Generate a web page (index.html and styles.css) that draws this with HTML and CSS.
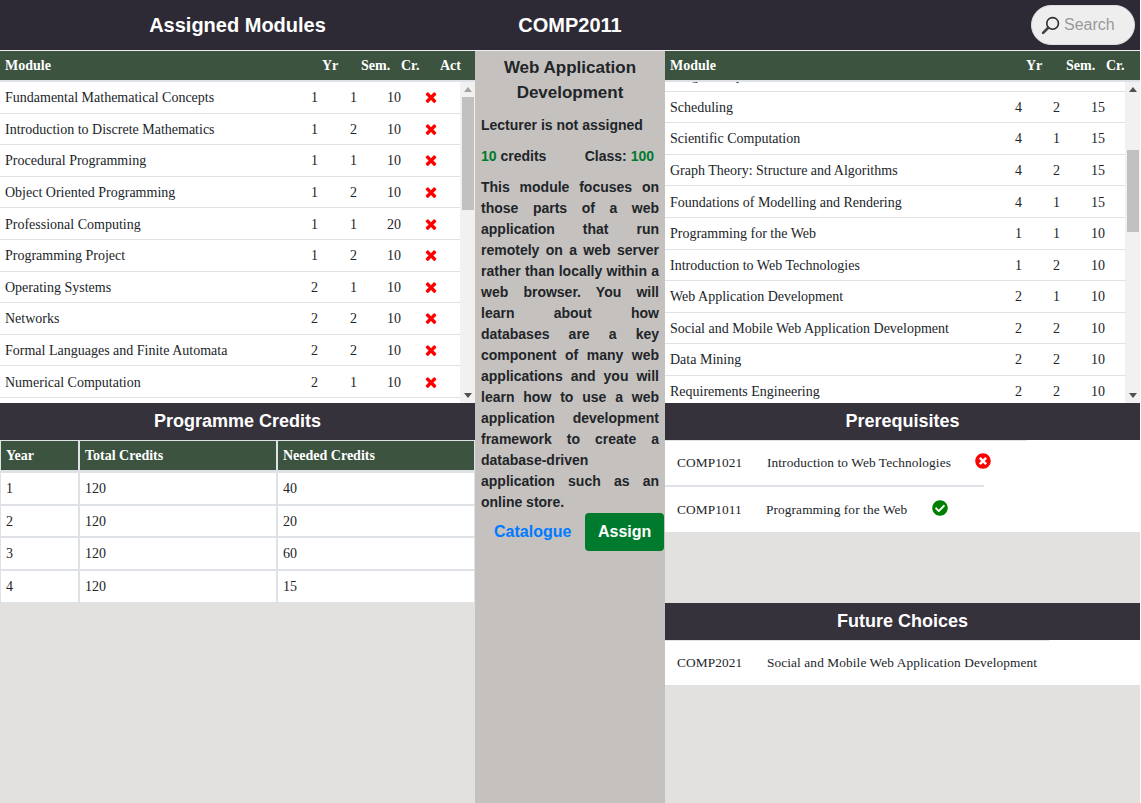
FILE: index.html
```html
<!DOCTYPE html>
<html lang="en">
<head>
<meta charset="utf-8">
<title>Assigned Modules</title>
<link rel="stylesheet" href="styles.css">
</head>
<body>
<svg class="defs" aria-hidden="true">
  <symbol id="i-times" viewBox="0 0 1792 1792"><path d="M1490 1322q0 40-28 68l-136 136q-28 28-68 28t-68-28l-294-294-294 294q-28 28-68 28t-68-28l-136-136q-28-28-28-68t28-68l294-294-294-294q-28-28-28-68t28-68l136-136q28-28 68-28t68 28l294 294 294-294q28-28 68-28t68 28l136 136q28 28 28 68t-28 68l-294 294 294 294q28 28 28 68z"/></symbol>
</svg>
<div class="page">
  <header class="topbar">
    <h1 class="topbar-title">Assigned Modules</h1>
    <h1 class="topbar-title">COMP2011</h1>
    <div class="topbar-search">
      <label class="search">
        <svg class="search-icon" viewBox="0 0 18 18"><circle cx="11" cy="7" r="5.5" fill="none" stroke="#2a2a2a" stroke-width="1.5"/><path d="M6.8 11.2L2 16" stroke="#444" stroke-width="2.6" stroke-linecap="round"/></svg>
        <input class="search-input" type="text" placeholder="Search">
      </label>
    </div>
  </header>
  <main class="columns">
    <section class="col-left">
      <div class="list-head head-left"><span>Module</span><span>Yr</span><span>Sem.</span><span>Cr.</span><span>Act</span></div>
      <div class="list-wrap">
        <div class="list-body">
          <div class="row row-left"><span>Fundamental Mathematical Concepts</span><span>1</span><span>1</span><span>10</span><svg class="x"><use href="#i-times"/></svg></div>
          <div class="row row-left"><span>Introduction to Discrete Mathematics</span><span>1</span><span>2</span><span>10</span><svg class="x"><use href="#i-times"/></svg></div>
          <div class="row row-left"><span>Procedural Programming</span><span>1</span><span>1</span><span>10</span><svg class="x"><use href="#i-times"/></svg></div>
          <div class="row row-left"><span>Object Oriented Programming</span><span>1</span><span>2</span><span>10</span><svg class="x"><use href="#i-times"/></svg></div>
          <div class="row row-left"><span>Professional Computing</span><span>1</span><span>1</span><span>20</span><svg class="x"><use href="#i-times"/></svg></div>
          <div class="row row-left"><span>Programming Project</span><span>1</span><span>2</span><span>10</span><svg class="x"><use href="#i-times"/></svg></div>
          <div class="row row-left"><span>Operating Systems</span><span>2</span><span>1</span><span>10</span><svg class="x"><use href="#i-times"/></svg></div>
          <div class="row row-left"><span>Networks</span><span>2</span><span>2</span><span>10</span><svg class="x"><use href="#i-times"/></svg></div>
          <div class="row row-left"><span>Formal Languages and Finite Automata</span><span>2</span><span>2</span><span>10</span><svg class="x"><use href="#i-times"/></svg></div>
          <div class="row row-left"><span>Numerical Computation</span><span>2</span><span>1</span><span>10</span><svg class="x"><use href="#i-times"/></svg></div>
          <div class="row row-left"><span>Algorithms and Data Structures</span><span>2</span><span>1</span><span>10</span><svg class="x"><use href="#i-times"/></svg></div>
          <div class="row row-left"><span>Databases</span><span>2</span><span>2</span><span>10</span><svg class="x"><use href="#i-times"/></svg></div>
          <div class="row row-left"><span>Software Engineering</span><span>3</span><span>1</span><span>20</span><svg class="x"><use href="#i-times"/></svg></div>
          <div class="row row-left"><span>Computer Architecture</span><span>3</span><span>1</span><span>10</span><svg class="x"><use href="#i-times"/></svg></div>
        </div>
        <div class="sb" aria-hidden="true">
          <div class="sb-arrow sb-up sb-off"></div>
          <div class="sb-track"><div class="sb-thumb sb-thumb-left"></div></div>
          <div class="sb-arrow sb-down"></div>
        </div>
      </div>
      <h2 class="band">Programme Credits</h2>
      <table class="credits">
        <thead><tr><th class="c1">Year</th><th class="c2">Total Credits</th><th class="c3">Needed Credits</th></tr></thead>
        <tbody>
          <tr><td>1</td><td>120</td><td>40</td></tr>
          <tr><td>2</td><td>120</td><td>20</td></tr>
          <tr><td>3</td><td>120</td><td>60</td></tr>
          <tr><td>4</td><td>120</td><td>15</td></tr>
        </tbody>
      </table>
    </section>
    <section class="col-mid">
      <h2 class="mid-title">Web Application Development</h2>
      <p class="mid-line">Lecturer is not assigned</p>
      <p class="mid-line mid-credits"><span><span class="green">10</span> credits</span><span>Class: <span class="green">100</span></span></p>
      <p class="mid-desc">This module focuses on those parts of a web application that run remotely on a web server rather than locally within a web browser. You will learn about how databases are a key component of many web applications and you will learn how to use a web application development framework to create a database-driven application such as an online store.</p>
      <div class="mid-actions">
        <a class="btn btn-link" href="#">Catalogue</a>
        <a class="btn btn-assign" href="#">Assign</a>
      </div>
    </section>
    <section class="col-right">
      <div class="list-head head-right"><span>Module</span><span>Yr</span><span>Sem.</span><span>Cr.</span></div>
      <div class="list-wrap">
        <div class="list-body body-right" id="catalogue">
          <div class="row row-right"><span>Advanced Algorithms</span><span>3</span><span>1</span><span>10</span></div>
          <div class="row row-right"><span>Computer Vision</span><span>3</span><span>1</span><span>10</span></div>
          <div class="row row-right"><span>Human Computer Interaction</span><span>3</span><span>2</span><span>10</span></div>
          <div class="row row-right"><span>Logic Programming</span><span>3</span><span>2</span><span>10</span></div>
          <div class="row row-right"><span>Mobile Computing</span><span>3</span><span>1</span><span>10</span></div>
          <div class="row row-right"><span>Quantum Computing</span><span>4</span><span>1</span><span>15</span></div>
          <div class="row row-right"><span>Image Compression</span><span>4</span><span>2</span><span>15</span></div>
          <div class="row row-right"><span>Scheduling</span><span>4</span><span>2</span><span>15</span></div>
          <div class="row row-right"><span>Scientific Computation</span><span>4</span><span>1</span><span>15</span></div>
          <div class="row row-right"><span>Graph Theory: Structure and Algorithms</span><span>4</span><span>2</span><span>15</span></div>
          <div class="row row-right"><span>Foundations of Modelling and Rendering</span><span>4</span><span>1</span><span>15</span></div>
          <div class="row row-right"><span>Programming for the Web</span><span>1</span><span>1</span><span>10</span></div>
          <div class="row row-right"><span>Introduction to Web Technologies</span><span>1</span><span>2</span><span>10</span></div>
          <div class="row row-right"><span>Web Application Development</span><span>2</span><span>1</span><span>10</span></div>
          <div class="row row-right"><span>Social and Mobile Web Application Development</span><span>2</span><span>2</span><span>10</span></div>
          <div class="row row-right"><span>Data Mining</span><span>2</span><span>2</span><span>10</span></div>
          <div class="row row-right"><span>Requirements Engineering</span><span>2</span><span>2</span><span>10</span></div>
          <div class="row row-right"><span>Software Testing</span><span>2</span><span>1</span><span>10</span></div>
          <div class="row row-right"><span>Cloud Computing</span><span>3</span><span>1</span><span>10</span></div>
          <div class="row row-right"><span>Embedded Systems</span><span>3</span><span>1</span><span>10</span></div>
        </div>
        <div class="sb" aria-hidden="true">
          <div class="sb-arrow sb-up"></div>
          <div class="sb-track"><div class="sb-thumb sb-thumb-right"></div></div>
          <div class="sb-arrow sb-down"></div>
        </div>
      </div>
      <h2 class="band">Prerequisites</h2>
      <div class="link-group">
        <div class="link-row link-first"><div class="link-inner"><span class="link-code">COMP1021</span><span class="link-name">Introduction to Web Technologies</span>
          <svg class="status" viewBox="0 0 512 512"><path fill="#f00" d="M256 8C119 8 8 119 8 256s111 248 248 248 248-111 248-248S393 8 256 8zm121.6 313.1c4.7 4.7 4.7 12.3 0 17L338 377.6c-4.7 4.7-12.3 4.7-17 0L256 312l-65.1 65.6c-4.7 4.7-12.3 4.7-17 0L134.4 338c-4.7-4.7-4.7-12.3 0-17l65.6-65-65.6-65.1c-4.7-4.7-4.7-12.3 0-17l39.6-39.6c4.7-4.7 12.3-4.7 17 0l65 65.7 65.1-65.6c4.7-4.7 12.3-4.7 17 0l39.6 39.6c4.7 4.7 4.7 12.3 0 17L312 256l65.6 65.1z"/></svg></div></div>
        <div class="link-row link-second"><div class="link-inner"><span class="link-code">COMP1011</span><span class="link-name link-name-tight">Programming for the Web</span>
          <svg class="status" viewBox="0 0 512 512"><path fill="#008000" d="M504 256c0 136.967-111.033 248-248 248S8 392.967 8 256 119.033 8 256 8s248 111.033 248 248zM227.314 387.314l184-184c6.248-6.248 6.248-16.379 0-22.627l-22.627-22.627c-6.248-6.249-16.379-6.249-22.628 0L216 308.118l-70.059-70.059c-6.248-6.248-16.379-6.248-22.628 0l-22.627 22.627c-6.248 6.248-6.248 16.379 0 22.627l104 104c6.249 6.249 16.379 6.249 22.628 0z"/></svg></div></div>
      </div>
      <h2 class="band band-future">Future Choices</h2>
      <div class="link-group">
        <div class="link-row link-first"><div class="link-inner link-inner-plain"><span class="link-code">COMP2021</span><span class="link-name">Social and Mobile Web Application Development</span></div></div>
      </div>
    </section>
  </main>
</div>
<script src="script.js"></script>
</body>
</html>
```
FILE: styles.css
```css
* { box-sizing: border-box; }
html, body { margin: 0; height: 100%; background: #fff; }
body {
  color: #212529;
  font-family: "Liberation Serif", serif;
  font-size: 14px;
  overflow: hidden;
}
.defs { display: none; }
.page { width: 1140px; height: 803px; background: #e2e1df; display: flex; flex-direction: column; }

.topbar {
  height: 51px;
  flex: none;
  background: #2d2a36;
  border-bottom: 1px solid #eeeeee;
  display: grid;
  grid-template-columns: 475px 190px 1fr;
  align-items: center;
}
.topbar-title {
  margin: 0;
  color: #fff;
  font: bold 20px/24px "Liberation Sans", sans-serif;
  text-align: center;
}
.topbar-search { display: flex; justify-content: flex-end; padding-right: 5px; }
.search {
  width: 104px;
  height: 40px;
  border-radius: 20px;
  background: #eeeeee;
  border: 1px solid #dddddd;
  display: flex;
  align-items: center;
  padding-left: 9px;
  gap: 4px;
}
.search-icon { width: 19px; height: 19px; flex: none; }
.search-input {
  width: 60px;
  border: 0;
  padding: 0;
  background: transparent;
  font: 16px "Liberation Sans", sans-serif;
  outline: none;
}
.search-input::placeholder { color: #999; opacity: 1; }

.columns { flex: 1; display: grid; grid-template-columns: 475px 190px 475px; min-height: 0; }
.col-left, .col-right { min-width: 0; display: flex; flex-direction: column; }
.col-mid { background: #c5c1be; padding: 4px 6px 0; font: bold 14px/21px "Liberation Sans", sans-serif; }

.list-head {
  height: 31px;
  flex: none;
  background: #3c533f;
  border-bottom: 2px solid #dee2e6;
  color: #fff;
  font-weight: bold;
  line-height: 29px;
  display: grid;
  padding-left: 5px;
}
.head-left { grid-template-columns: 317px 39px 40px 39px 1fr; }
.head-right { grid-template-columns: 356px 40px 40px 1fr; }

.list-wrap { position: relative; height: 321px; flex: none; }
.list-body { height: 100%; background: #fff; overflow-y: scroll; }
.body-right { padding-top: 0.4px; }

.sb {
  position: absolute;
  top: 0;
  right: 0;
  bottom: 0;
  width: 15px;
  background: #f1f1f1;
  display: flex;
  flex-direction: column;
}
.sb-arrow { height: 15px; flex: none; display: flex; align-items: center; justify-content: center; }
.sb-arrow::before { content: ""; border-left: 4px solid transparent; border-right: 4px solid transparent; }
.sb-up::before { border-bottom: 5px solid #505050; }
.sb-down::before { border-top: 5px solid #505050; }
.sb-off::before { border-bottom-color: #a3a3a3; }
.sb-track { flex: 1; padding: 0 1px 0 2px; }
.sb-thumb { background: #c1c1c1; }
.sb-thumb-left { height: 113px; }
.sb-thumb-right { height: 82px; margin-top: 53px; }

.row {
  height: 31.6px;
  border-bottom: 1px solid #dee2e6;
  display: grid;
  align-items: center;
  padding-left: 5px;
  padding-top: 1.2px;
  line-height: 30px;
}
.row-left { grid-template-columns: 306px 39px 37px 35.5px 16px; }
.row-right { grid-template-columns: 345px 38px 38px 30px; }
.x { width: 16px; height: 16px; fill: #f00; margin-top: -2px; }

.band {
  height: 37px;
  flex: none;
  margin: 0;
  background: #35323c;
  color: #fff;
  font: bold 18px/37px "Liberation Sans", sans-serif;
  text-align: center;
}
.band-future { margin-top: 71px; }

.credits { width: 475px; border-collapse: separate; border-spacing: 0; table-layout: fixed; background: #fff; }
.credits th, .credits td { border: 1px solid #dee2e6; padding: 0 5px; text-align: left; }
.credits th { height: 32px; background: #3c533f; color: #fff; border-bottom-width: 2px; }
.credits td { height: 32.7px; padding-top: 1px; }
.c1 { width: 79px; }
.c2, .c3 { width: 198px; }

.mid-title { margin: 0 0 10px; font-size: 17px; line-height: 25px; text-align: center; font-weight: bold; }
.mid-line { margin: 0 0 10px; }
.mid-credits { display: flex; justify-content: space-between; padding-right: 5px; }
.green { color: #007a2c; }
.mid-desc { margin: 0; text-align: justify; }
.mid-actions { display: flex; width: 183px; }
.btn {
  flex: none;
  height: 38px;
  border: 1px solid transparent;
  border-radius: 4px;
  padding: 0 12px;
  font-size: 16px;
  line-height: 36px;
  text-decoration: none;
}
.btn-link { width: 104px; color: #007bff; }
.btn-assign { width: 79px; background: #007a2c; color: #fff; }

.link-group { background: #fff; flex: none; }
.link-row { display: flex; }
.link-first { height: 45px; }
.link-second { height: 47px; }
.link-inner { display: flex; align-items: flex-start; padding: 0 36px 0 12px; border-top: 1px solid #dee2e6; font-size: 13.33px; letter-spacing: 0.1px; line-height: 18px; }
.link-inner-plain { padding-right: 12px; }
.link-second .link-inner { border-top-width: 2px; }
.link-code { margin-top: 13px; width: 90px; flex: none; }
.link-name { margin-top: 13px; }
.link-name-tight { margin-left: -1px; }
.status { width: 16px; height: 16px; margin: 12px 0 0 24px; flex: none; }
.link-second .status { margin: 13px 0 0 25px; }
.link-second .link-code, .link-second .link-name { margin-top: 14px; }
```
FILE: script.js
```js
document.getElementById('catalogue').scrollTop = 212;
```
